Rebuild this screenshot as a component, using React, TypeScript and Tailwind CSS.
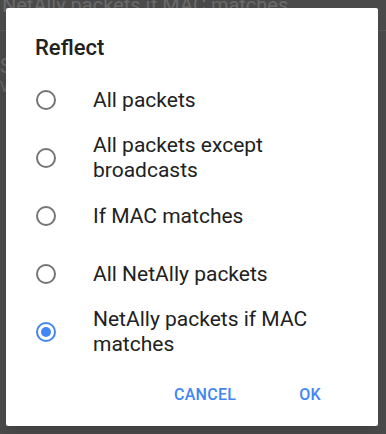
import { useState } from "react";

const OPTIONS = [
  "All packets",
  "All packets except broadcasts",
  "If MAC matches",
  "All NetAlly packets",
  "NetAlly packets if MAC matches",
];

function Radio({ checked }: { checked: boolean }) {
  return (
    <span
      className={`flex h-[20px] w-[20px] shrink-0 items-center justify-center rounded-full border-2 ${
        checked ? "border-[#4285f4]" : "border-[#757575]"
      }`}
    >
      {checked && <span className="h-[10px] w-[10px] rounded-full bg-[#4285f4]" />}
    </span>
  );
}

export default function App() {
  const [selected, setSelected] = useState(4);

  return (
    <div
      className="relative h-[434px] w-[386px] overflow-hidden bg-[#4a4a4a]"
      style={{ fontFamily: "Roboto, 'Liberation Sans', sans-serif" }}
    >
      {/* page behind the scrim */}
      <div className="text-[#6a6a6a]">
        <div className="h-[31px] border-b border-[#575757] pl-[2px] text-[20px] leading-[10px]">
          NetAlly packets if MAC matches
        </div>
        <div className="mt-[25px] text-[20px] leading-[20px]">S</div>
        <div className="mt-[4px] text-[14px] leading-[14px]">V</div>
      </div>

      {/* dialog */}
      <div className="absolute left-[6px] top-[8px] flex h-[418px] w-[372px] flex-col rounded-[2px] bg-white shadow-lg">
        <h2 className="pl-[29px] pt-[27px] text-[22px] font-medium leading-[26px] text-[#212121]">
          Reflect
        </h2>
        <div className="mt-[10px] flex flex-col">
          {OPTIONS.map((label, i) => (
            <button
              key={label}
              onClick={() => setSelected(i)}
              className="flex h-[58px] items-center text-left"
            >
              <span className="flex w-[87px] justify-start pl-[30px]">
                <Radio checked={selected === i} />
              </span>
              <span className="w-[250px] text-[21px] leading-[25px] text-[#212121]">{label}</span>
            </button>
          ))}
        </div>
        <div className="mt-[24px] flex justify-end gap-[63px] pr-[57px]">
          <button className="text-[16px] font-medium leading-[20px] tracking-[0.3px] text-[#4285f4]">CANCEL</button>
          <button className="text-[16px] font-medium leading-[20px] tracking-[0.3px] text-[#4285f4]">OK</button>
        </div>
      </div>
    </div>
  );
}
